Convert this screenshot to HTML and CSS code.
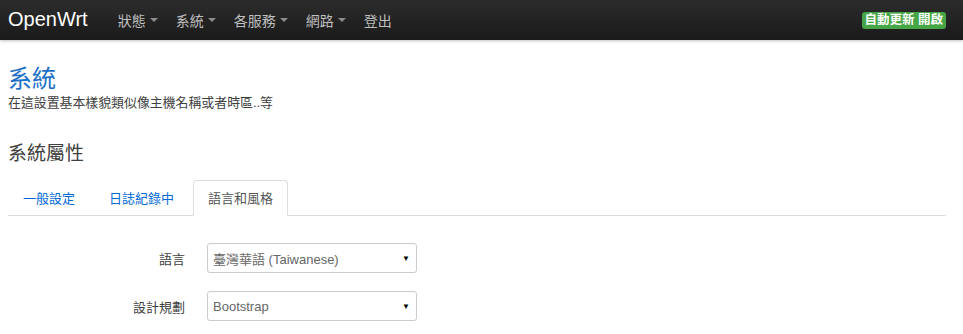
FILE: index.html
```html
<!DOCTYPE html>
<html lang="zh-Hant">
<head>
  <meta charset="UTF-8">
  <title>OpenWrt - 系統</title>
  <link rel="stylesheet" href="styles.css">
</head>
<body>

  <!-- Top bar -->
  <div class="navbar">
    <a class="brand" href="#">OpenWrt</a>
    <ul class="nav">
      <li><a href="#">狀態<span class="caret"></span></a></li>
      <li><a href="#">系統<span class="caret"></span></a></li>
      <li><a href="#">各服務<span class="caret"></span></a></li>
      <li><a href="#">網路<span class="caret"></span></a></li>
      <li><a href="#">登出</a></li>
    </ul>
    <span class="label-success">自動更新 開啟</span>
  </div>

  <div class="container">
    <h2>系統</h2>
    <div class="desc">在這設置基本樣貌類似像主機名稱或者時區..等</div>

    <h3>系統屬性</h3>

    <ul class="tabs">
      <li><a href="#">一般設定</a></li>
      <li><a href="#">日誌紀錄中</a></li>
      <li class="active"><a href="#">語言和風格</a></li>
    </ul>

    <div class="form">
      <div class="row">
        <label>語言</label>
        <div class="select">
          <span>臺灣華語 (Taiwanese)</span>
          <span class="arrow">&#9660;</span>
        </div>
      </div>
      <div class="row">
        <label>設計規劃</label>
        <div class="select">
          <span>Bootstrap</span>
          <span class="arrow">&#9660;</span>
        </div>
      </div>
    </div>
  </div>

</body>
</html>
```

FILE: styles.css
```css
* {
  box-sizing: border-box;
}

body {
  margin: 0;
  font-family: "Liberation Sans", Arial, "Noto Sans CJK TC", sans-serif;
  font-size: 13px;
  color: #404040;
  background: #fff;
}

a {
  text-decoration: none;
}

ul {
  list-style: none;
  margin: 0;
  padding: 0;
}

/* Navbar */
.navbar {
  height: 40px;
  display: flex;
  align-items: center;
  padding: 0 17px 0 8px;
  background: linear-gradient(to bottom, #2c2c2c, #1a1a1a);
  box-shadow: 0 1px 3px rgba(0,0,0,0.25);
}

.brand {
  color: #fff;
  font-size: 20px;
  margin-right: 21px;
  padding-bottom: 2px;
}

.nav {
  display: flex;
  flex: 1;
}

.nav a {
  display: flex;
  align-items: center;
  gap: 4px;
  color: #bfbfbf;
  font-size: 14px;
  padding: 0 9px;
}

.caret {
  display: inline-block;
  width: 0;
  height: 0;
  border-top: 4px solid #8c8c8c;
  border-left: 4px solid transparent;
  border-right: 4px solid transparent;
}

.label-success {
  background: #46a546;
  color: #fff;
  font-weight: bold;
  font-size: 12.5px;
  padding: 1px 3px;
  border-radius: 3px;
  line-height: 15px;
}

/* Content */
.container {
  padding: 0 17px 0 8px;
}

h2 {
  font-size: 24px;
  font-weight: normal;
  color: #1e6fc8;
  margin: 24px 0 0;
  line-height: 30px;
}

.desc {
  font-size: 12.9px;
  line-height: 16px;
  margin-top: 1px;
}

h3 {
  font-size: 19px;
  font-weight: normal;
  color: #404040;
  margin: 30px 0 0;
  line-height: 26px;
}

.tabs {
  display: flex;
  margin-top: 13px;
  border-bottom: 1px solid #ddd;
}

.tabs li {
  margin-bottom: -1px;
}

.tabs a {
  display: block;
  height: 36px;
  line-height: 35px;
  padding: 0 14px;
  margin-right: 4px;
  color: #0069d6;
  font-size: 13px;
  border: 1px solid transparent;
  border-radius: 4px 4px 0 0;
}

.tabs .active a {
  color: #555;
  background: #fff;
  border-color: #ddd;
  border-bottom-color: transparent;
}

/* Form */
.form {
  padding-top: 27px;
}

.row {
  display: flex;
  align-items: center;
  margin-bottom: 18px;
}

.row label {
  width: 177px;
  text-align: right;
  margin-right: 22px;
  font-size: 13px;
  color: #404040;
}

.select {
  width: 210px;
  height: 30px;
  display: flex;
  align-items: center;
  justify-content: space-between;
  padding: 0 6px 0 5px;
  border: 1px solid #ccc;
  border-radius: 3px;
  background: #fff;
  color: #666;
  font-size: 13px;
}

.arrow {
  color: #000;
  font-size: 8px;
}
```
